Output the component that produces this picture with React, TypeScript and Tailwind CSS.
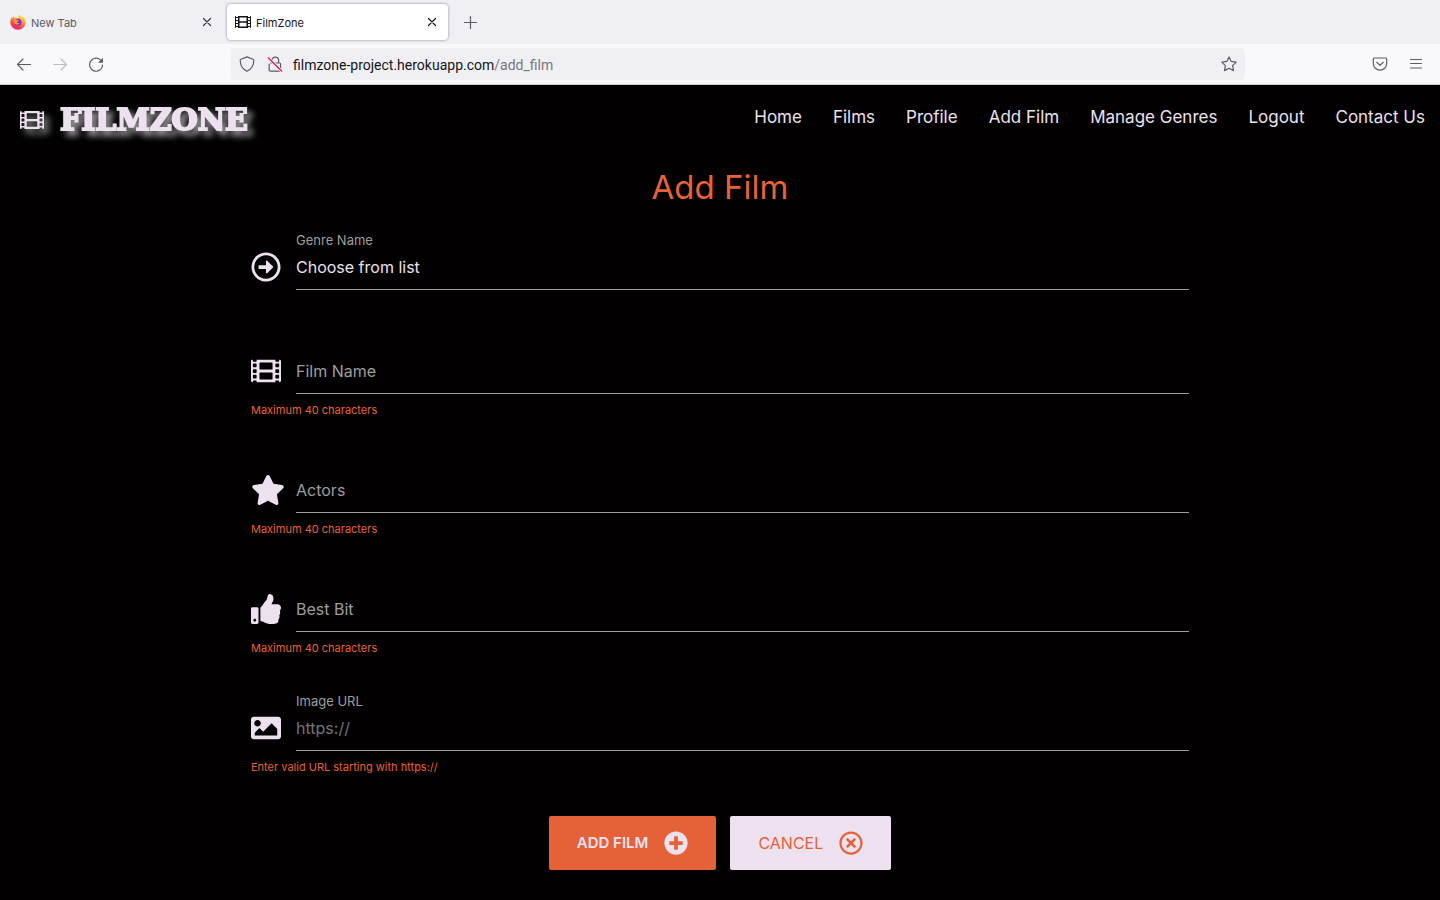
import type { ReactNode } from "react";
import {
  FaFilm,
  FaImage,
  FaPlusCircle,
  FaRegArrowAltCircleRight,
  FaRegTimesCircle,
  FaStar,
  FaThumbsUp,
} from "react-icons/fa";

const navLinks = ["Home", "Films", "Profile", "Add Film", "Manage Genres", "Logout", "Contact Us"];

function FirefoxLogo() {
  return (
    <svg viewBox="0 0 16 16" className="size-4" aria-hidden="true">
      <defs>
        <linearGradient id="fox" x1="0.8" y1="0.05" x2="0.3" y2="1">
          <stop offset="0" stopColor="#fff44f" />
          <stop offset="0.35" stopColor="#ffa02e" />
          <stop offset="0.65" stopColor="#ff4f4b" />
          <stop offset="1" stopColor="#f5106b" />
        </linearGradient>
      </defs>
      <path
        d="M9.6.3c.6 1.6 1.7 2 2.6 3 .3-.2.3-.7.2-1.1 2 1.300 3.300 3.700 3.300 6.200A7.700 7.700 0 0 1 8 15.800 7.700 7.700 0 0 1 .3 8.200c0-2 .7-3.800 1.600-5 .1.500.2.800.4 1.100.5-1 1.200-1.700 1.700-2 0 .6.200 1.200.5 1.500 1.600-.3 3.400.3 3.900.700C8.300 3 8.400 1.300 9.600.3z"
        fill="url(#fox)"
      />
      <circle cx="8" cy="8.300" r="3.500" fill="#7a2be8" />
      <path d="M3.600 5.500c1.400-.7 2.900-.3 3.900.6l1.500.3c-.2 1-1.900.9-2.200 1.700-.2 1 1.500 1.700 3 .8-1 2.300-4.400 2.200-5.400.2-.5-1-.8-2.300-.8-3.600z" fill="#ff9a24" />
    </svg>
  );
}

function LineIcon({ children, className }: { children: ReactNode; className: string }) {
  return (
    <svg
      viewBox="0 0 16 16"
      className={className}
      fill="none"
      stroke="currentColor"
      strokeWidth="1.2"
      strokeLinecap="round"
      strokeLinejoin="round"
      aria-hidden="true"
    >
      {children}
    </svg>
  );
}

function CloseIcon() {
  return (
    <LineIcon className="size-4">
      <path d="M4.500 4.500l7 7M11.500 4.500l-7 7" />
    </LineIcon>
  );
}

function BrowserChrome() {
  return (
    <div className="text-[#5b5b66]">
      <div className="flex h-11 items-center bg-[#f0f0f4] text-[11px]">
        <div className="flex w-[227px] items-center pr-3 pl-[10px]">
          <FirefoxLogo />
          <span className="ml-[5px] flex-1 pt-[2px]">New Tab</span>
          <button type="button" aria-label="Close New Tab" className="text-[#3a3944]">
            <CloseIcon />
          </button>
        </div>
        <div className="flex h-9 w-[221px] items-center rounded bg-white pr-2 pl-2 text-[#15141a] shadow-[0_0_3px_rgba(90,90,120,0.7)]">
          <FaFilm className="size-4" />
          <span className="ml-[5px] flex-1 pt-[2px]">FilmZone</span>
          <button type="button" aria-label="Close FilmZone">
            <CloseIcon />
          </button>
        </div>
        <button type="button" aria-label="Open a new tab" className="ml-[14px]">
          <LineIcon className="size-4">
            <path d="M8.500 2.500v12M2.500 8.500h12" />
          </LineIcon>
        </button>
      </div>

      <div className="flex h-[41px] items-center border-b border-[#cccccf] bg-[#f9f9fb] px-4">
        <div className="flex flex-1 gap-5">
          <button type="button" aria-label="Back">
            <LineIcon className="size-4">
              <path d="M14.500 8.500H1.500M7 3L1.500 8.500 7 14" />
            </LineIcon>
          </button>
          <button type="button" aria-label="Forward" className="text-[#bdbdc3]">
            <LineIcon className="size-4">
              <path d="M1.500 8.500h13M9 3L14.500 8.500 9 14" />
            </LineIcon>
          </button>
          <button type="button" aria-label="Reload">
            <LineIcon className="size-4">
              <path d="M13.300 4.800A6.500 6.500 0 1 0 14.600 9" />
              <path d="M15 1.800v5h-5z" fill="currentColor" stroke="none" />
            </LineIcon>
          </button>
        </div>
        <div className="ml-9 flex h-8 w-[1014px] items-center rounded bg-[#f0f0f4] px-2">
          <LineIcon className="size-4">
            <path d="M8 .9l6 2.300c.5.2.8.500.8 1C14.800 9.500 12.500 13 8 15.200 3.500 13 1.200 9.500 1.200 4.200c0-.5.300-.8.8-1z" />
          </LineIcon>
          <LineIcon className="ml-3 size-4">
            <path d="M4.800 7V4.500a3.400 3.400 0 0 1 6.800 0V7M3.800 7h8.800c.6 0 1 .4 1 1v6.200c0 .6-.4 1-1 1H3.200c-.6 0-1-.4-1-1V8" />
            <path d="M1.200 1.800l13.600 13.400" stroke="#f0f0f4" strokeWidth="3" />
            <path d="M1.200 1.800l13.600 13.400" stroke="#e9105f" />
          </LineIcon>
          <span className="ml-[10px] flex-1 pt-[2px] font-['Roboto',sans-serif] text-[14px] text-[#15141a]">
            filmzone-project.herokuapp.com<span className="text-[#77767e]">/add_film</span>
          </span>
          <button type="button" aria-label="Bookmark this page">
            <LineIcon className="size-4">
              <path d="M8 .9l2.200 4.500 5 .7-3.600 3.500.9 5L8 12.300l-4.500 2.300.9-5L.8 6.100l5-.7z" />
            </LineIcon>
          </button>
        </div>
        <div className="flex flex-1 justify-end gap-5">
          <button type="button" aria-label="Save to Pocket">
            <LineIcon className="size-4">
              <path d="M2.500 2h11c.7 0 1.200.500 1.200 1.200V7.500a6.700 6.700 0 0 1-13.400 0V3.200c0-.7.500-1.200 1.200-1.200zM4.700 6.300L8 9.400l3.300-3.100" />
            </LineIcon>
          </button>
          <button type="button" aria-label="Open application menu">
            <LineIcon className="size-4">
              <path d="M2.500 3.500h11M2.500 7.500h11M2.500 12h11" />
            </LineIcon>
          </button>
        </div>
      </div>
    </div>
  );
}

type FieldProps = {
  id: string;
  label: string;
  icon: ReactNode;
  floating?: boolean;
  helper?: string;
  children: ReactNode;
};

function Field({ id, label, icon, floating, helper, children }: FieldProps) {
  return (
    <div>
      <div className="flex h-[46px] items-center text-[#ede1ef]">
        <span className="w-[45px] shrink-0 text-[30px]">{icon}</span>
        <div className="relative h-full flex-1 border-b border-[#9e9e9e]">
          <label
            htmlFor={id}
            className={
              floating
                ? "absolute -top-[14px] left-0 text-[13px] leading-5 text-[#9e9e9e]"
                : "pointer-events-none absolute inset-y-0 left-0 flex items-center pt-px text-[16px] text-[#9e9e9e]"
            }
          >
            {label}
          </label>
          {children}
        </div>
      </div>
      {helper && <p className="mt-2 text-[11px] leading-4 text-[#e76238]">{helper}</p>}
    </div>
  );
}

const inputClass = "h-full w-full bg-transparent pt-px text-[16px] outline-none placeholder:text-[#757575]";

export default function App() {
  return (
    <div className="min-h-screen bg-[#020001] font-['Inter',sans-serif]">
      <BrowserChrome />

      <header className="flex h-[70px] items-start justify-between pr-[15px] pl-5">
        <a
          href="#home"
          className="flex h-[70px] items-center text-[#ede1ef] drop-shadow-[5px_5px_3px_rgba(255,255,255,0.6)]"
        >
          <FaFilm className="size-6" />
          <span className="ml-4 font-['DejaVu_Serif',serif] text-[30px] leading-9 font-black [-webkit-text-stroke:2px_#ede1ef]">
            FILMZONE
          </span>
        </a>
        <nav className="flex h-[66px] items-center gap-[31px] text-[17px] text-[#ede1ef]">
          {navLinks.map((name) => (
            <a key={name} href="#nav">
              {name}
            </a>
          ))}
        </nav>
      </header>

      <main className="mx-auto w-[938px] max-w-full">
        <h1 className="mt-3 text-center text-[33px] leading-10 text-[#e76238]">Add Film</h1>

        <form className="mt-[37px]">
          <div className="flex flex-col gap-[49px]">
            <div className="mb-[9px]">
              <Field id="genre" label="Genre Name" icon={<FaRegArrowAltCircleRight />} floating>
                <select id="genre" className="h-full w-full appearance-none bg-transparent text-[16px] outline-none">
                  <option>Choose from list</option>
                </select>
              </Field>
            </div>
            <Field id="film" label="Film Name" icon={<FaFilm />} helper="Maximum 40 characters">
              <input id="film" type="text" maxLength={40} className={inputClass} />
            </Field>
            <Field
              id="actors"
              label="Actors"
              icon={<FaStar className="h-[30px] w-[34px]" />}
              helper="Maximum 40 characters"
            >
              <input id="actors" type="text" maxLength={40} className={inputClass} />
            </Field>
            <Field id="best" label="Best Bit" icon={<FaThumbsUp />} helper="Maximum 40 characters">
              <input id="best" type="text" maxLength={40} className={inputClass} />
            </Field>
            <Field id="image" label="Image URL" icon={<FaImage />} floating helper="Enter valid URL starting with https://">
              <input id="image" type="url" placeholder="https://" className={inputClass} />
            </Field>
          </div>

          <div className="mt-[41px] flex justify-center gap-[14px]">
            <button
              type="submit"
              className="flex h-[54px] items-center gap-4 rounded-[2px] bg-[#e56238] px-7 text-[15px] font-semibold text-[#ede1ef]"
            >
              ADD FILM
              <FaPlusCircle className="size-6" />
            </button>
            <a
              href="#films"
              className="flex h-[54px] items-center gap-4 rounded-[2px] bg-[#ede1ef] px-7 text-[16px] text-[#e56238]"
            >
              CANCEL
              <FaRegTimesCircle className="size-6" />
            </a>
          </div>
        </form>
      </main>
    </div>
  );
}
